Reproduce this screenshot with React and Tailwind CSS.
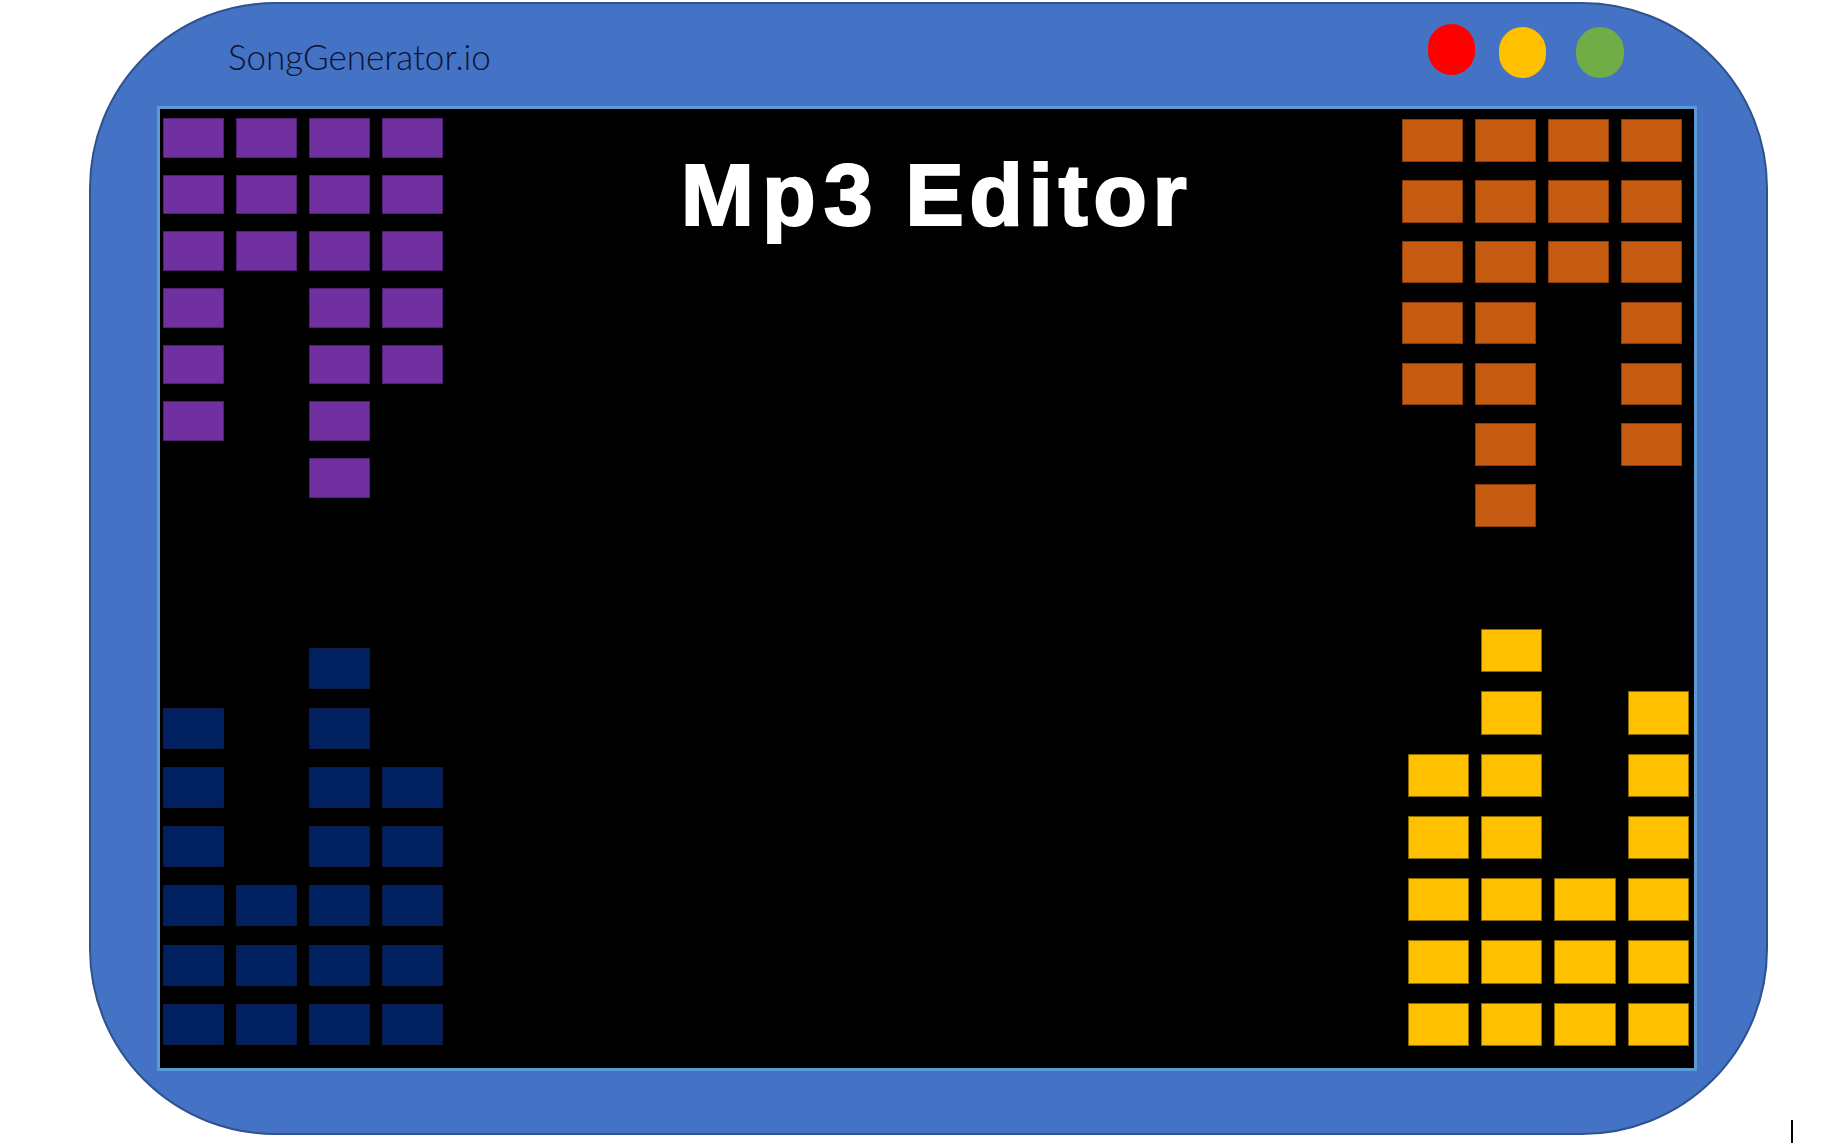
// Mp3 editor mockup: blue window frame, black stage with four level meters
const PURPLE = [6, 3, 7, 5]
const NAVY = [6, 3, 7, 5]
const ORANGE = [5, 7, 3, 6]
const YELLOW = [5, 7, 3, 6]

export default function App() {
  return (
    <div className="relative h-[1144px] w-[1821px] overflow-hidden bg-white">
      <div className="ml-[89px] mt-[2px] flex h-[1133px] w-[1679px] flex-col rounded-[186px] border-2 border-[#2f528f] bg-[#4472c4]">
        {/* title bar */}
        <div className="flex h-[102px] shrink-0 items-start">
          <div className="ml-[137px] mt-[30px] font-['Lato','Open_Sans',sans-serif] text-[35px] font-light leading-[44px] text-[#0e1230]">
            SongGenerator.io
          </div>
          <div className="ml-auto mr-[142px] flex items-start">
            <div className="mt-[20px] h-[51px] w-[47px] rounded-full bg-[#ff0000]" />
            <div className="ml-[24px] mt-[23px] h-[51px] w-[47px] rounded-full bg-[#ffc000]" />
            <div className="ml-[30px] mt-[23px] h-[51px] w-[48px] rounded-full bg-[#70ad47]" />
          </div>
        </div>

        {/* stage */}
        <div className="ml-[66px] flex h-[965px] w-[1540px] shrink-0 border-[3px] border-[#5b9bd5] bg-black">
          <div className="flex shrink-0 flex-col justify-between pb-[23px] pl-[3px] pt-[9px]">
            <Meter cols={PURPLE} align="top" w="w-[61px]" h="h-[39.5px]" gapX="gap-x-[12px]" gapY="gap-y-[17.2px]" color="bg-[#7030a0] border-[#4e1f72]" />
            <Meter cols={NAVY} align="bottom" w="w-[61px]" h="h-[41px]" gapX="gap-x-[12px]" gapY="gap-y-[18.3px]" color="bg-[#002060] border-[#0d1a45]" />
          </div>

          <div className="flex-1 pl-[28px] pt-[42px] text-center">
            {/* reference uses Arial Black; widen Liberation Sans Bold with stroke + tracking */}
            <h1 className="font-['Liberation_Sans',Arial,sans-serif] text-[88px] font-bold leading-[88px] text-white [-webkit-text-stroke:2px_white]">
              <span className="tracking-[8px]">Mp3</span>{' '}
              <span className="tracking-[5.5px]">Editor</span>
            </h1>
          </div>

          <div className="flex shrink-0 flex-col items-end justify-between pb-[22px] pt-[10px]">
            <div className="pr-[12px]">
              <Meter cols={ORANGE} align="top" w="w-[61px]" h="h-[42.7px]" gapX="gap-x-[12px]" gapY="gap-y-[18.2px]" color="bg-[#c55a11] border-[#8a3d0b]" />
            </div>
            <div className="pr-[5px]">
              <Meter cols={YELLOW} align="bottom" w="w-[61.3px]" h="h-[43.3px]" gapX="gap-x-[12.1px]" gapY="gap-y-[19px]" color="bg-[#ffc000] border-[#8c6a00]" />
            </div>
          </div>
        </div>
      </div>

      {/* text caret */}
      <div className="absolute left-[1791px] top-[1120px] h-[23px] w-[2px] bg-black" />
    </div>
  )
}

function Meter({ cols, align, w, h, gapX, gapY, color }) {
  return (
    <div className={`flex ${gapX} ${align === 'top' ? 'items-start' : 'items-end'}`}>
      {cols.map((n, ci) => (
        <div key={ci} className={`flex flex-col ${gapY}`}>
          {Array.from({ length: n }).map((_, ri) => (
            <div key={ri} className={`${w} ${h} border ${color}`} />
          ))}
        </div>
      ))}
    </div>
  )
}
